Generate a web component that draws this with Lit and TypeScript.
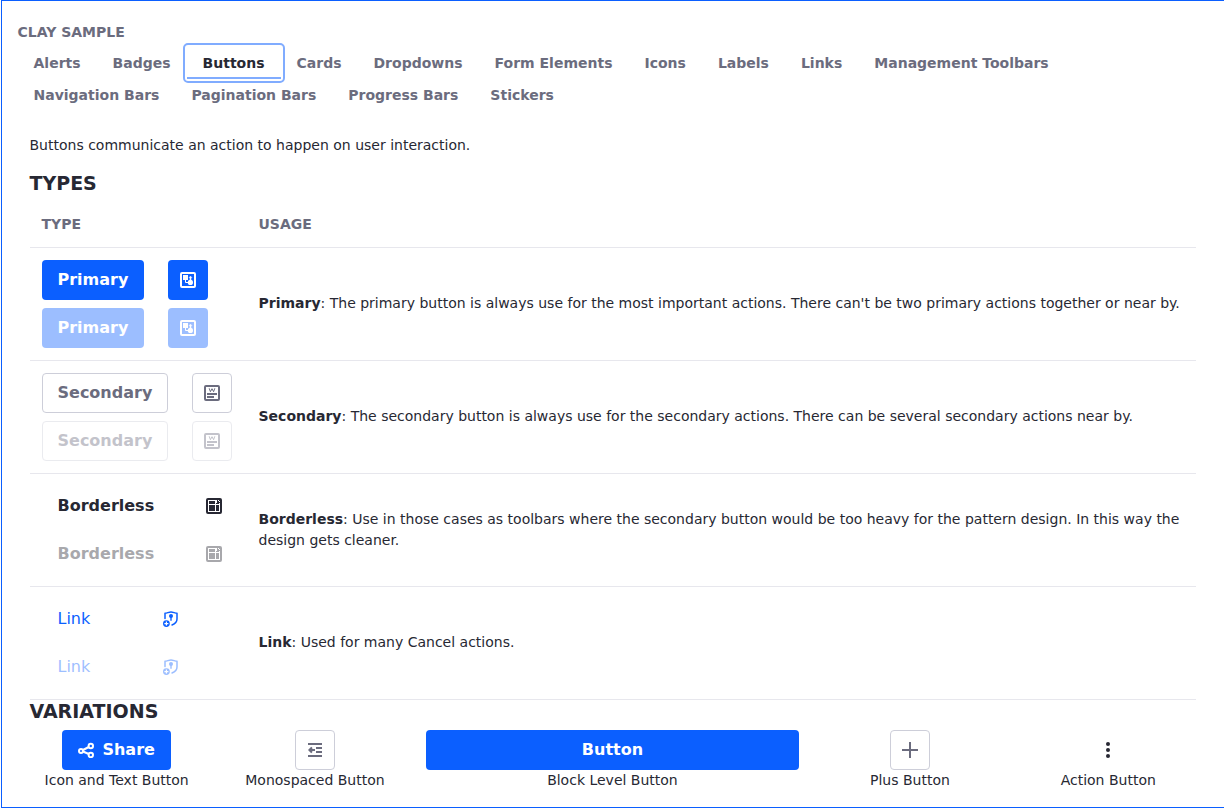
import { LitElement, html, css, svg } from "lit";
import { customElement } from "lit/decorators.js";
import { classMap } from "lit/directives/class-map.js";

const icons: Record<string, unknown> = {
  adt: svg`<rect x="1" y="1" width="14" height="14" rx="1" fill="none" stroke="currentColor" stroke-width="2"/>
    <path d="M3 3h5v5H3z"/><path d="M5.500 8v2.500H8.500" fill="none" stroke="currentColor" stroke-width="1"/>
    <path d="M10.500 4l1.400 1.500-.8 1V8h-1.200V6.500l-.8-1z" stroke="currentColor" stroke-width=".3" stroke-linejoin="round"/>
    <circle cx="10.400" cy="10.400" r="2.600"/>`,
  wiki: svg`<rect x="1" y="1" width="14" height="14" rx="1" fill="none" stroke="currentColor" stroke-width="2"/>
    <path d="M5.200 3.300l1.200 3.400L8 3.700l1.600 3L10.800 3.300" fill="none" stroke="currentColor" stroke-width="1"/>
    <path d="M3 8h10v2H3zM3 11h7v2H3z"/>`,
  page: svg`<path fill-rule="evenodd" d="M2 0h12a2 2 0 0 1 2 2v12a2 2 0 0 1-2 2H2a2 2 0 0 1-2-2V2a2 2 0 0 1 2-2zM2 2v12h12V5h-2.500a.500.500 0 0 1-.5-.5V2z"/>
    <path d="M12 2l2 2" stroke="#fff" stroke-width="1"/>
    <path d="M3 3h6v3H3zM10 5h3v1h-3zM3 7h6v6H3zM10 7h3v6h-3z"/>`,
  shield: svg`<path d="M2 7.500V2.300C4 2.100 6.200 1 8 1s4 1.100 6 1.300V8c0 3-2 4.800-5 6" fill="none" stroke="currentColor" stroke-width="1.500" stroke-linecap="round" stroke-linejoin="round"/>
    <circle cx="8" cy="5" r="2"/><path d="M7.300 5h1.400v4.800H7.300z"/>
    <path fill-rule="evenodd" d="M3.400 9.200a3.400 3.400 0 1 1 0 6.800 3.400 3.400 0 0 1 0-6.800zM2.800 10.600V12H1.400v1.200h1.400v1.400H4v-1.400h1.400V12H4v-1.400z"/>`,
  share: svg`<g fill="none" stroke="currentColor" stroke-width="2"><circle cx="3" cy="9" r="2"/><circle cx="12.800" cy="4" r="2.200"/><circle cx="12.800" cy="13" r="2.200"/><path d="M5 8l5.800-2.900M5 9.600l5.800 2.400" stroke-width="2.200"/></g>`,
  indent: svg`<path d="M1 1h14v2H1zM9 5h6v2H9zM9 9h6v2H9zM1 13h14v2H1zM1 8l3.200-3.200L5.300 5.800V7H8v2H5.300v1.200l-1.100 1z"/>`,
  plus: svg`<path d="M7 0h2v7h7v2H9v7H7V9H0V7h7z"/>`,
  dots: svg`<circle cx="8" cy="2" r="2"/><circle cx="8" cy="8" r="2"/><circle cx="8" cy="14" r="2"/>`,
};
const icon = (name: string) => html`<svg class="icon" viewBox="0 0 16 16" fill="currentColor" aria-hidden="true">${icons[name]}</svg>`;

const tabs = ["Alerts", "Badges", "Buttons", "Cards", "Dropdowns", "Form Elements", "Icons", "Labels", "Links",
  "Management Toolbars", "Navigation Bars", "Pagination Bars", "Progress Bars", "Stickers"];

const types = [
  { name: "Primary", kind: "primary", icon: "adt", usage: "The primary button is always use for the most important actions. There can't be two primary actions together or near by." },
  { name: "Secondary", kind: "secondary", icon: "wiki", usage: "The secondary button is always use for the secondary actions. There can be several secondary actions near by." },
  { name: "Borderless", kind: "borderless", icon: "page", usage: "Use in those cases as toolbars where the secondary button would be too heavy for the pattern design. In this way the design gets cleaner." },
  { name: "Link", kind: "link", icon: "shield", usage: "Used for many Cancel actions." },
];

@customElement("app-root")
export class AppRoot extends LitElement {
  static styles = css`
    :host { display: block; font: 14px/21px "DejaVu Sans", sans-serif; color: #272833; }
    * { box-sizing: border-box; }
    .frame { height: 808px; margin-left: 1px; border: 1px solid #0b5fff; border-right: 0; padding: 21px 16px 0 15.5px; overflow: hidden; background: #fff; }
    .title { font-weight: 700; color: #6b6c7e; height: 25px; }
    .nav { display: flex; flex-wrap: wrap; height: 64px; }
    .tab { height: 32px; padding: 5.5px 16px; font-weight: 700; color: #6b6c7e; text-decoration: none; }
    .tab.active { color: #272833; box-shadow: inset 0 -2px #80acff; position: relative; }
    .tab.active::after { content: ""; position: absolute; inset: -4px; border: 2px solid #80acff; border-radius: 5px; }
    .content { padding: 24px 12px 0; }
    .content p { margin: 0; }
    h3 { margin: 0; font-size: 19px; line-height: 24px; font-weight: 700; }
    .types { margin-top: 15px; }
    .table { margin-top: 5px; }
    .row { display: grid; grid-template-columns: 217px 1fr; border-bottom: 1px solid #e7e7ed; align-items: center; }
    .head { height: 48px; font-weight: 700; color: #6b6c7e; }
    .cell { padding: 12px; }
    .usage { padding: 11px 12px 12px; }
    .head .cell { padding: 2px 12px 0; }
    .buttons { display: flex; flex-direction: column; gap: 8px; }
    .pair { display: flex; gap: 24px; white-space: nowrap; }
    .btn { height: 40px; display: inline-flex; flex: none; align-items: center; justify-content: center; padding: 0 15px; border: 1px solid transparent; border-radius: 4px; background: none; color: #272833; font: 700 16px/24px "DejaVu Sans", sans-serif; }
    .mono { width: 40px; padding: 0; }
    .primary { background: #0b5fff; color: #fff; }
    .secondary { background: #fff; border-color: #cdced9; color: #6b6c7e; }
    .link { color: #0b5fff; font-weight: 400; }
    .link.mono { margin-left: 20.5px; }
    .btn:disabled { opacity: .4; }
    .block { width: 100%; }
    .share { gap: 8px; }
    .icon { width: 16px; height: 16px; display: block; flex: none; }
    .variations { display: grid; grid-template-columns: 2fr 2fr 4fr 2fr 2fr; margin: 7px .6px 0 0; }
    .item { display: flex; flex-direction: column; align-items: center; padding: 0 12px; white-space: nowrap; }
    .sub { padding: 0 12px; margin-top: -1px; }
  `;

  private pair(t: (typeof types)[number], disabled: boolean) {
    return html`<div class="pair">
      <button class="btn ${t.kind}" ?disabled=${disabled}>${t.name}</button>
      <button class="btn mono ${t.kind}" ?disabled=${disabled} aria-label=${t.name}>${icon(t.icon)}</button>
    </div>`;
  }

  render() {
    return html`<div class="frame">
      <div class="title">CLAY SAMPLE</div>
      <nav class="nav">${tabs.map((t) => html`<a class=${classMap({ tab: true, active: t === "Buttons" })}>${t}</a>`)}</nav>
      <div class="content">
        <p>Buttons communicate an action to happen on user interaction.</p>
        <h3 class="types">TYPES</h3>
        <div class="table">
          <div class="row head"><div class="cell">TYPE</div><div class="cell">USAGE</div></div>
          ${types.map((t) => html`<div class="row">
            <div class="cell buttons">${this.pair(t, false)}${this.pair(t, true)}</div>
            <div class="usage"><b>${t.name}</b>: ${t.usage}</div>
          </div>`)}
        </div>
      </div>
      <h3 class="sub">VARIATIONS</h3>
      <div class="variations">
        <div class="item"><button class="btn primary share">${icon("share")}Share</button>Icon and Text Button</div>
        <div class="item"><button class="btn secondary mono">${icon("indent")}</button>Monospaced Button</div>
        <div class="item"><button class="btn primary block">Button</button>Block Level Button</div>
        <div class="item"><button class="btn secondary mono">${icon("plus")}</button>Plus Button</div>
        <div class="item"><button class="btn mono">${icon("dots")}</button>Action Button</div>
      </div>
    </div>`;
  }
}
